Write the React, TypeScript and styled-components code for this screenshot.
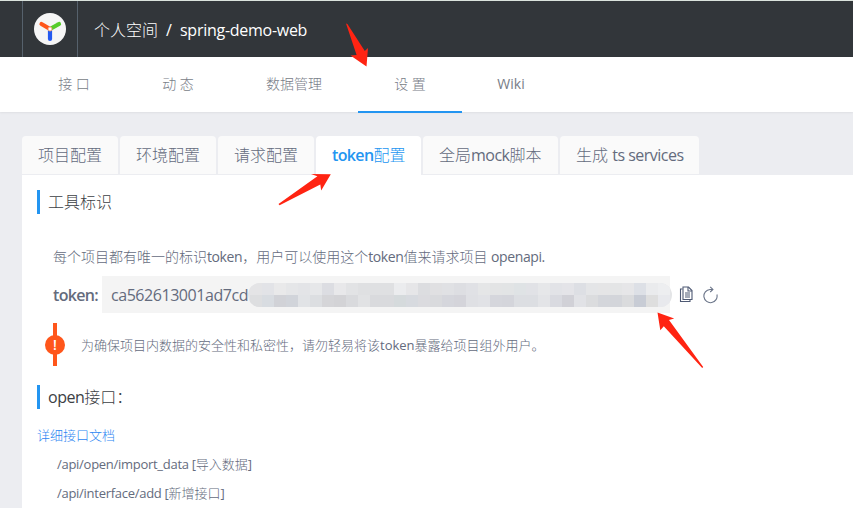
import React from 'react';
import styled, { createGlobalStyle } from 'styled-components';

const GlobalStyle = createGlobalStyle`
  * { box-sizing: border-box; }
  body {
    margin: 0;
    background: #ecedf1;
    font-family: "Open Sans", "Noto Sans CJK SC", sans-serif;
    font-weight: 300;
    color: #646b7d;
    overflow: hidden;
  }
`;

const Page = styled.div`
  position: relative;
  width: 853px;
  height: 508px;
  overflow: hidden;
  display: flex;
  flex-direction: column;
  white-space: nowrap;
`;

const Latin = styled.span<{ $track?: number; $weight?: number }>`
  letter-spacing: ${p => p.$track ?? 0}px;
  font-weight: ${p => p.$weight ?? 400};
`;

const Header = styled.header`
  flex: none;
  display: flex;
  height: 57px;
  padding-left: 22px;
  border-top: 1px solid #dbe3dd;
  background: #32363a;
`;

const LogoCell = styled.div`
  width: 56px;
  display: flex;
  align-items: center;
  justify-content: center;
  border-left: 1px solid #56616c;
  border-right: 1px solid #56616c;
`;

const Breadcrumb = styled.div`
  display: flex;
  align-items: center;
  height: 57px;
  padding-left: 16px;
  font-size: 16px;
  line-height: 24px;
  color: #fff;
`;

const Slash = styled.span`
  width: 22px;
  text-align: center;
  font-weight: 400;
`;

const Nav = styled.nav`
  flex: none;
  display: flex;
  height: 55px;
  padding-left: 22px;
  background: #fff;
  box-shadow: 0 1px 2px rgba(0, 0, 0, 0.06);
`;

const NavItem = styled.div<{ $width: number; $active?: boolean }>`
  width: ${p => p.$width}px;
  height: 56px;
  display: flex;
  justify-content: center;
  font-size: 14px;
  line-height: 54px;
  color: #787d87;
  border-bottom: 2px solid ${p => (p.$active ? '#2395f1' : 'transparent')};
`;

const Tabs = styled.div`
  flex: none;
  display: flex;
  gap: 2px;
  margin: 24px 0 0 22px;
  height: 39px;
`;

const Tab = styled.div<{ $width: number; $active?: boolean }>`
  width: ${p => p.$width}px;
  height: ${p => (p.$active ? 39 : 38)}px;
  padding-left: 16px;
  border-radius: 4px 4px 0 0;
  background: ${p => (p.$active ? '#fff' : '#fafafa')};
  color: ${p => (p.$active ? '#2395f1' : '#646b7d')};
  font-size: 16px;
  line-height: 39px;
`;

const Panel = styled.main`
  flex: 1;
  margin-left: 22px;
  padding: 15px 0 0 15px;
  background: #fff;
`;

const SectionTitle = styled.h2`
  margin: 0;
  height: 24px;
  padding-left: 8px;
  border-left: 3px solid #2395f1;
  color: #3c4044;
  font-size: 16px;
  font-weight: 300;
  line-height: 24px;
`;

const Intro = styled.p`
  margin: 32px 0 0 16px;
  height: 22px;
  font-size: 14px;
  line-height: 22px;
`;

const TokenRow = styled.div`
  display: flex;
  align-items: center;
  height: 37px;
  margin: 8px 0 0 16px;
  font-size: 16px;
`;

const TokenLabel = styled.span`
  width: 49px;
`;

const TokenValue = styled.div`
  display: flex;
  align-items: center;
  width: 568px;
  height: 37px;
  padding-left: 9px;
  background: #f4f4f4;
`;

const TokenText = styled.span`
  flex: none;
  width: 137px;
`;

const TokenActions = styled.div`
  display: flex;
  align-items: center;
  gap: 8px;
  margin-left: 9px;
`;

const Notice = styled.div`
  display: flex;
  align-items: center;
  height: 43px;
  margin: 10px 0 0 8px;
  font-size: 13px;
`;

const NoticeMark = styled.div`
  display: flex;
  align-items: center;
  justify-content: center;
  width: 20px;
  height: 43px;
  margin-right: 16px;
  background: linear-gradient(#ff561b, #ff561b) center / 4px 43px no-repeat;
`;

const NoticeBadge = styled.span`
  width: 20px;
  height: 20px;
  border-radius: 50%;
  background: #ff561b;
  color: #fff;
  font-size: 14px;
  font-weight: 600;
  line-height: 19px;
  text-align: center;
`;

const OpenSection = styled.section`
  margin-top: 19px;
`;

const DocLink = styled.a`
  display: block;
  margin-top: 16px;
  color: #2c86f2;
  font-size: 13px;
  line-height: 20px;
`;

const ApiLine = styled.div`
  padding: 0 0 0 20px;
  height: 29px;
  font-size: 13px;
  line-height: 39px;
`;

const Annotations = styled.svg`
  position: absolute;
  left: 0;
  top: 0;
  pointer-events: none;
`;

const MaskSvg = styled.svg`
  flex: none;
`;

const Logo = () => (
  <svg width="32" height="32" viewBox="0 0 32 32">
    <circle cx="16" cy="16" r="16" fill="#f6f6f6" />
    <g strokeWidth="4.2" strokeLinecap="round">
      <path d="M16 17V26" stroke="#2459f0" />
      <path d="M16 16L25 11" stroke="#57cc2b" />
      <path d="M16 16L7.5 11" stroke="#ff561b" />
    </g>
    <circle cx="16" cy="16" r="2" fill="#fff" stroke="#f39a76" strokeWidth="0.8" />
  </svg>
);

const CopyIcon = () => (
  <svg width="15" height="18" viewBox="0 0 15 18" fill="none" stroke="#4f5a74" strokeWidth="1.1">
    <path d="M4 1H9.5L13 4.5V13.5H4Z" />
    <path d="M9 1V5H13M3.5 3H1.5V15.5H11V14M6 7H11M6 9H11M6 11H11" />
  </svg>
);

const RefreshIcon = () => (
  <svg width="16" height="18" viewBox="0 0 16 18" fill="none" stroke="#6b7589" strokeWidth="1.1">
    <path d="M10.5 3.5H8A6.6 6.6 0 1 0 14.9 8.5" />
    <path d="M8.2 0.8L10.9 3.4L8.2 6" />
  </svg>
);

const TOP_CELLS = [
  '#e4e4e6', '#e2e3e7', '#e9e9ea', '#e5e6e8', '#e3e4e7', '#e6e7e9', '#dcdde2', '#e8e8ea', '#e2e3e5',
  '#dfe0e2', '#dfe0e2', '#dfe0e2', '#ebecee', '#e6e6e8', '#dcdde0', '#e0e0e2', '#e0e1e4', '#dddee2',
  '#e0e1e5', '#e5e6e7', '#e3e4e5', '#e2e4e5', '#dfe3e5', '#e1e2e6', '#e6e7e9', '#e2e3e7', '#e4e4e8',
  '#dddfe4', '#e4e5e7', '#e5e5e6', '#e4e5e6', '#e6e6e8', '#dde0e6', '#eaebed', '#edeef0',
];
const BOTTOM_CELLS = [
  '#dddee0', '#d8dce1', '#d1d2d7', '#d1d4da', '#e1e3e6', '#dcdee1', '#d5d5d8', '#d3d3d6', '#d9dadd',
  '#e1e2e4', '#d9dadd', '#d9dadd', '#d5dadc', '#d7dadf', '#dbdbdf', '#d9dadd', '#d5d6dc', '#d4d4da',
  '#dfe0e4', '#e1e2e6', '#d5d6dc', '#d4d5db', '#dcdee2', '#dcdee2', '#e3e4e7', '#d9dae0', '#d1d1d7',
  '#e1e2e6', '#dbdcde', '#d4d6db', '#d3d5da', '#dadbdd', '#c8ccd5', '#dedede', '#e8e9ed',
];

const Mask = () => (
  <MaskSvg width="424" height="24" viewBox="0 0 424 24">
    <defs>
      <clipPath id="pill"><rect width="424" height="24" rx="12" /></clipPath>
    </defs>
    <g clipPath="url(#pill)" shapeRendering="crispEdges">
      <rect width="424" height="24" fill="#e4e5e7" />
      {TOP_CELLS.map((c, i) => <rect key={i} x={i * 12 + 2} y="0" width="12" height="12" fill={c} />)}
      {BOTTOM_CELLS.map((c, i) => <rect key={i} x={i * 12 + 2} y="12" width="12" height="12" fill={c} />)}
    </g>
  </MaskSvg>
);

export default function App() {
  return (
    <Page>
      <GlobalStyle />
      <Header>
        <LogoCell><Logo /></LogoCell>
        <Breadcrumb>
          <span>个人空间</span>
          <Slash>/</Slash>
          <Latin $track={-0.27}>spring-demo-web</Latin>
        </Breadcrumb>
      </Header>
      <Nav>
        <NavItem $width={104}>接 口</NavItem>
        <NavItem $width={104}>动 态</NavItem>
        <NavItem $width={128}>数据管理</NavItem>
        <NavItem $width={104} $active>设 置</NavItem>
        <NavItem $width={98}><Latin>Wiki</Latin></NavItem>
      </Nav>
      <Tabs>
        <Tab $width={96}>项目配置</Tab>
        <Tab $width={96}>环境配置</Tab>
        <Tab $width={96}>请求配置</Tab>
        <Tab $width={105} $active><Latin $weight={600} $track={-0.65}>token</Latin>配置</Tab>
        <Tab $width={135}>全局<Latin $track={-0.5}>mock</Latin>脚本</Tab>
        <Tab $width={139}>生成 <Latin $track={-0.5}>ts services</Latin></Tab>
      </Tabs>
      <Panel>
        <SectionTitle>工具标识</SectionTitle>
        <Intro>
          每个项目都有唯一的标识<Latin $track={-0.4}>token</Latin>，用户可以使用这个<Latin $track={-0.4}>token</Latin>值来请求项目 <Latin $track={-0.4}>openapi.</Latin>
        </Intro>
        <TokenRow>
          <TokenLabel><Latin $weight={600} $track={-0.7}>token:</Latin></TokenLabel>
          <TokenValue>
            <TokenText><Latin $track={-0.45}>ca562613001ad7cd</Latin></TokenText>
            <Mask />
          </TokenValue>
          <TokenActions>
            <CopyIcon />
            <RefreshIcon />
          </TokenActions>
        </TokenRow>
        <Notice>
          <NoticeMark><NoticeBadge>!</NoticeBadge></NoticeMark>
          <span>为确保项目内数据的安全性和私密性，请勿轻易将该<Latin>token</Latin>暴露给项目组外用户。</span>
        </Notice>
        <OpenSection>
          <SectionTitle><Latin $track={-0.5}>open</Latin>接口：</SectionTitle>
          <DocLink>详细接口文档</DocLink>
          <ApiLine><Latin $track={-0.28}>/api/open/import_data [</Latin>导入数据<Latin>]</Latin></ApiLine>
          <ApiLine><Latin $track={-0.28}>/api/interface/add [</Latin>新增接口<Latin>]</Latin></ApiLine>
        </OpenSection>
      </Panel>
      <Annotations width="853" height="508" viewBox="0 0 853 508" fill="#ff2412">
        <path d="M346 23.5L347.4 24L364.8 51L368 48L366.5 66.5L350.5 55.5L356.6 55Z" />
        <path d="M278.5 204L279.6 205.2L320.3 184.6L321.2 190.5L330.8 174.2L311 174L317.4 176.2Z" />
        <path d="M702.2 368L703.2 367L669 320L674.2 318.4L657.5 312.6L660.3 330.2L663.8 326.2Z" />
      </Annotations>
    </Page>
  );
}
